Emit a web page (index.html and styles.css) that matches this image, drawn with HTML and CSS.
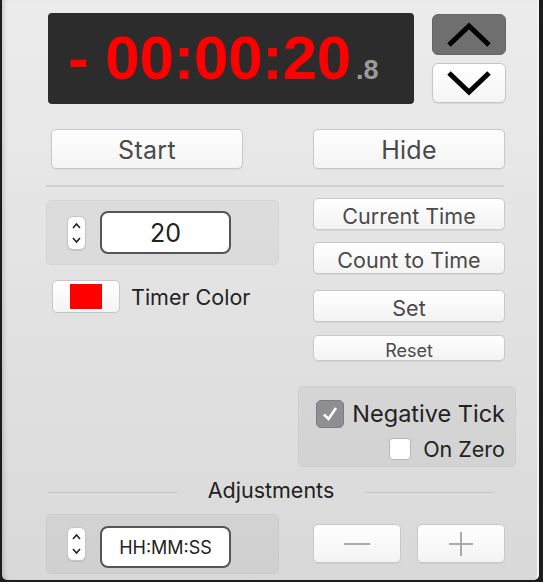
FILE: index.html
```html
<!DOCTYPE html>
<html lang="en">
<head>
    <meta charset="UTF-8">
    <meta name="viewport" content="width=device-width, initial-scale=1.0">
    <title>Timer</title>
    <link rel="stylesheet" href="styles.css">
</head>
<body>
    <div class="window">
        <div class="top-row">
            <div class="display">
                <span class="time">- 00:00:20</span>
                <span class="tenths">.8</span>
            </div>
            <div class="arrows">
                <button class="arrow-btn up">
                    <svg width="46" height="28" viewBox="0 0 46 28"><path d="M3 24 L23 5 L43 24" fill="none" stroke="#000" stroke-width="5"/></svg>
                </button>
                <button class="arrow-btn down">
                    <svg width="46" height="28" viewBox="0 0 46 28"><path d="M3 4 L23 23 L43 4" fill="none" stroke="#000" stroke-width="5"/></svg>
                </button>
            </div>
        </div>

        <div class="main-buttons">
            <button class="btn big">Start</button>
            <button class="btn big">Hide</button>
        </div>

        <div class="separator"></div>

        <div class="controls">
            <div class="left-col">
                <div class="group-box">
                    <div class="stepper">
                        <svg width="11" height="30" viewBox="0 0 11 30"><path d="M2 10 L5.5 6 L9 10 M2 20 L5.5 24 L9 20" fill="none" stroke="#222" stroke-width="1.6"/></svg>
                    </div>
                    <div class="field big-field">20</div>
                </div>
                <div class="color-row">
                    <div class="color-well"><span class="swatch"></span></div>
                    <span class="label">Timer Color</span>
                </div>
            </div>
            <div class="right-col">
                <button class="btn mid">Current Time</button>
                <button class="btn mid">Count to Time</button>
                <button class="btn mid set">Set</button>
                <button class="btn small">Reset</button>
            </div>
        </div>

        <div class="check-box-group">
            <div class="check-row">
                <span class="checkbox checked">
                    <svg width="20" height="20" viewBox="0 0 20 20"><path d="M4 10.5 L8.5 15 L16 4" fill="none" stroke="#fff" stroke-width="2.6"/></svg>
                </span>
                <span class="check-label">Negative Tick</span>
            </div>
            <div class="check-row">
                <span class="checkbox small-check"></span>
                <span class="check-label small-label">On Zero</span>
            </div>
        </div>

        <div class="adjust-title">
            <span class="rule"></span>
            <span class="adjust-text">Adjustments</span>
            <span class="rule"></span>
        </div>

        <div class="adjust-row">
            <div class="group-box low">
                <div class="stepper">
                    <svg width="11" height="30" viewBox="0 0 11 30"><path d="M2 10 L5.5 6 L9 10 M2 20 L5.5 24 L9 20" fill="none" stroke="#222" stroke-width="1.6"/></svg>
                </div>
                <div class="field hms">HH:MM:SS</div>
            </div>
            <div class="pm-buttons">
                <button class="btn pm">
                    <svg width="30" height="30" viewBox="0 0 30 30"><path d="M2 15 H28" stroke="#aaa" stroke-width="2"/></svg>
                </button>
                <button class="btn pm">
                    <svg width="30" height="30" viewBox="0 0 30 30"><path d="M3 15 H27 M15 3 V27" stroke="#aaa" stroke-width="2"/></svg>
                </button>
            </div>
        </div>
    </div>
</body>
</html>
```

FILE: styles.css
```css
body {
    margin: 0;
    background-color: #1c1c1c;
    font-family: Inter, "Liberation Sans", sans-serif;
    width: 543px;
    height: 582px;
    overflow: hidden;
}
.window {
    margin-left: 2px;
    width: 537px;
    height: 580px;
    background: linear-gradient(#ececec, #d9d9d9);
    border-radius: 0 0 5px 5px;
    border-right: 2px solid #f2f2f2;
    box-sizing: border-box;
    box-shadow: inset 4px 0 4px -2px rgba(0, 0, 0, 0.15);
}
button {
    font-family: inherit;
    padding: 0;
    cursor: pointer;
}
.top-row {
    display: flex;
    padding: 13px 0 0 46px;
    gap: 18px;
}
.display {
    width: 366px;
    height: 91px;
    background-color: #2c2c2c;
    border-radius: 4px;
    box-sizing: border-box;
    padding: 8px 0 0 20px;
    display: flex;
    align-items: baseline;
    font-family: "Liberation Sans", Arial, sans-serif;
    font-weight: bold;
}
.time {
    color: #ff0000;
    font-size: 62px;
    line-height: 74px;
    letter-spacing: -0.3px;
}
.tenths {
    color: #9a9a9a;
    font-size: 27px;
    margin-left: 5px;
}
.arrows {
    display: flex;
    flex-direction: column;
    gap: 8px;
    padding-top: 1px;
}
.arrow-btn {
    width: 74px;
    height: 41px;
    border-radius: 6px;
    display: flex;
    align-items: center;
    justify-content: center;
}
.arrow-btn.up {
    background-color: #6f6f6f;
    border: 1px solid #666;
}
.arrow-btn.down {
    height: 40px;
    background: linear-gradient(#ffffff, #f4f4f4);
    border: 1px solid #c6c6c6;
    box-shadow: 0 1px 1px rgba(0, 0, 0, 0.08);
}
.btn {
    background: linear-gradient(#ffffff, #f3f3f3);
    border: 1px solid #c8c8c8;
    border-radius: 5px;
    color: #4a4a4a;
    box-shadow: 0 1px 1px rgba(0, 0, 0, 0.06);
    width: 192px;
}
.main-buttons {
    display: flex;
    gap: 70px;
    padding: 25px 0 0 49px;
}
.btn.big {
    height: 40px;
    font-size: 25px;
    letter-spacing: 0.3px;
    padding-top: 2px;
}
.separator {
    height: 2px;
    background-color: #d0d0d0;
    margin: 16px 0 0 44px;
    width: 458px;
}
.controls {
    display: flex;
    padding: 11px 0 0 44px;
    gap: 34px;
}
.left-col {
    width: 233px;
    display: flex;
    flex-direction: column;
}
.group-box {
    width: 233px;
    height: 65px;
    background-color: rgba(0, 0, 0, 0.04);
    border: 1px solid rgba(0, 0, 0, 0.03);
    border-radius: 5px;
    box-sizing: border-box;
    display: flex;
    align-items: center;
    padding-left: 20px;
    margin-top: 2px;
}
.stepper {
    width: 19px;
    height: 34px;
    background-color: #fff;
    border: 1px solid #c6c6c6;
    border-radius: 6px;
    box-sizing: border-box;
    display: flex;
    align-items: center;
    justify-content: center;
    box-shadow: 0 1px 1px rgba(0, 0, 0, 0.1);
}
.field {
    margin-left: 14px;
    width: 131px;
    height: 43px;
    background-color: #fff;
    border: 2px solid #555;
    border-radius: 8px;
    box-sizing: border-box;
    display: flex;
    align-items: center;
    justify-content: center;
    color: #222;
}
.big-field {
    font-size: 25px;
}
.color-row {
    display: flex;
    align-items: center;
    margin-top: 15px;
    padding-left: 6px;
}
.color-well {
    width: 68px;
    height: 33px;
    background: linear-gradient(#ffffff, #f4f4f4);
    border: 1px solid #c8c8c8;
    border-radius: 5px;
    box-sizing: border-box;
    display: flex;
    align-items: center;
    justify-content: center;
}
.swatch {
    width: 32px;
    height: 25px;
    background-color: #ff0000;
}
.label {
    margin-left: 11px;
    font-size: 21.5px;
    color: #222;
}
.right-col {
    display: flex;
    flex-direction: column;
}
.btn.mid {
    height: 32px;
    font-size: 21.5px;
    margin-bottom: 12px;
    padding-top: 3px;
}
.btn.set {
    margin-top: 4px;
    margin-bottom: 13px;
}
.btn.small {
    height: 26px;
    font-size: 18px;
    padding-top: 4px;
}
.check-box-group {
    margin: 25px 0 0 296px;
    width: 218px;
    height: 81px;
    background-color: rgba(0, 0, 0, 0.045);
    border: 1px solid rgba(0, 0, 0, 0.03);
    border-radius: 5px;
    box-sizing: border-box;
    display: flex;
    flex-direction: column;
    align-items: flex-end;
    padding: 12px 10px 0 0;
}
.check-row {
    display: flex;
    align-items: center;
}
.checkbox {
    display: flex;
    align-items: center;
    justify-content: center;
    box-sizing: border-box;
}
.checkbox.checked {
    width: 28px;
    height: 28px;
    background-color: #8e8e93;
    border: 1px solid #7c7c80;
    border-radius: 5px;
}
.checkbox.small-check {
    width: 22px;
    height: 22px;
    background-color: #fff;
    border: 1px solid #b8b8b8;
    border-radius: 4px;
    margin-top: 8px;
}
.check-label {
    font-size: 23.5px;
    color: #222;
    margin-left: 8px;
}
.check-label.small-label {
    font-size: 21.5px;
    margin-left: 12px;
    margin-top: 8px;
}
.adjust-title {
    display: flex;
    align-items: center;
    padding: 10px 0 0 46px;
    width: 446px;
}
.rule {
    flex: 1;
    height: 1px;
    background-color: #c4c4c4;
    margin-top: 4px;
}
.adjust-text {
    font-size: 21.5px;
    color: #222;
    padding: 0 31px;
}
.adjust-row {
    display: flex;
    padding: 11px 0 0 44px;
    gap: 34px;
}
.group-box.low {
    height: 60px;
    margin-top: 0;
}
.hms {
    height: 42px;
    margin-top: 6px;
    font-size: 18px;
}
.pm-buttons {
    display: flex;
    gap: 16px;
    padding-top: 10px;
}
.btn.pm {
    width: 88px;
    height: 39px;
    display: flex;
    align-items: center;
    justify-content: center;
}
```
